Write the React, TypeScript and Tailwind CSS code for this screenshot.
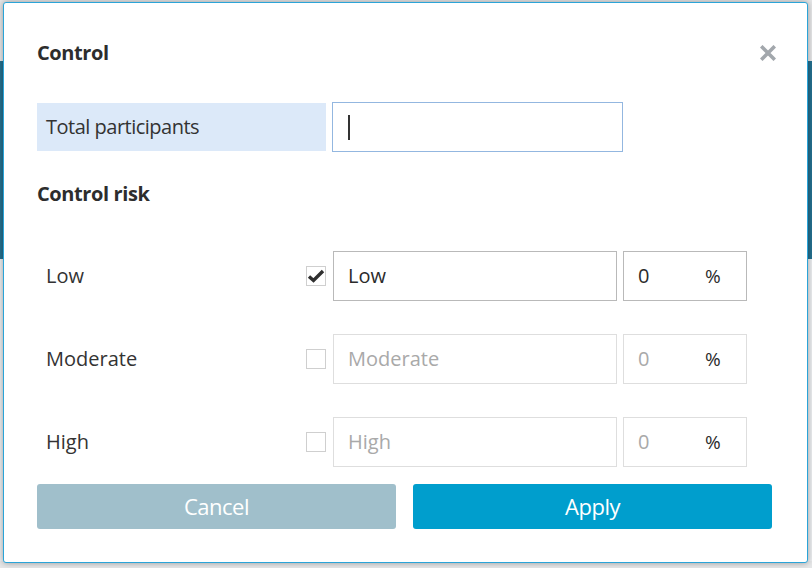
const rows = [
  { name: 'Low', checked: true },
  { name: 'Moderate', checked: false },
  { name: 'High', checked: false },
];

function CloseIcon() {
  return (
    <svg width="16" height="16" viewBox="0 0 16 16" className="block">
      <path d="M2.5 2.5 L13.5 13.5 M13.5 2.5 L2.5 13.5" stroke="#a2a7ac" strokeWidth="3.6" strokeLinecap="square" />
    </svg>
  );
}

function Checkbox({ checked }: { checked: boolean }) {
  return (
    <div className="w-[20px] h-[20px] border border-[#cfcfcf] bg-white flex items-center justify-center shrink-0">
      {checked && (
        <svg width="18" height="14" viewBox="0 0 18 14" className="block -mt-[1px]">
          <path d="M2 7.5 L6.5 11.5 L16 2" stroke="#2f2f2f" strokeWidth="3.4" fill="none" />
        </svg>
      )}
    </div>
  );
}

function RiskRow({ name, checked }: { name: string; checked: boolean }) {
  const text = checked ? 'text-[#2b2b2b]' : 'text-[#a9a9a9]';
  const border = checked ? 'border-[#b9b9b9]' : 'border-[#dedede]';
  return (
    <div className="flex items-center h-[50px]">
      <div className="w-[269px] pl-[9px] text-[20px] text-[#333]">{name}</div>
      <Checkbox checked={checked} />
      <div className={`ml-[7px] w-[284px] h-[50px] border ${border} flex items-center pl-[14px] text-[20px] ${text}`}>
        {name}
      </div>
      <div className={`ml-[6px] w-[124px] h-[50px] border ${border} flex items-center text-[20px] ${text}`}>
        <span className="pl-[14px] w-[81px]">0</span>
        <span className="text-[#2b2b2b] text-[19px]">%</span>
      </div>
    </div>
  );
}

export default function App() {
  return (
    <div className="relative w-[812px] h-[568px] bg-[#e6e7e8] overflow-hidden" style={{ fontFamily: '"Open Sans", "Noto Sans", sans-serif' }}>
      <div className="mt-[61px] h-[198px] bg-[#24708f]" />
      <div className="h-[302px] bg-[#eceef0]" />

      <div className="absolute left-[3px] top-[2px] w-[805px] h-[561px] bg-white border border-[#2aa4d8] rounded-[3px] shadow-[0_0_6px_rgba(0,0,0,0.35)] px-[33px]">
        <div className="h-[99px] flex items-center justify-between">
          <h1 className="text-[20px] font-bold text-[#2d2d2d] tracking-[-0.4px]">Control</h1>
          <div className="mr-[-2px]">
            <CloseIcon />
          </div>
        </div>

        <div className="flex items-center">
          <div className="w-[289px] h-[48px] bg-[#dce9f9] flex items-center pl-[9px] text-[20px] text-[#333] tracking-[-0.5px]">
            Total participants
          </div>
          <div className="ml-[6px] w-[291px] h-[50px] border border-[#93b7e0] flex items-center pl-[15px]">
            <div className="w-[1.5px] h-[25px] bg-[#333]" />
          </div>
        </div>

        <h2 className="mt-[28px] text-[20px] font-bold text-[#2d2d2d] tracking-[-0.4px] leading-[28px]">Control risk</h2>

        <div className="mt-[43px] flex flex-col gap-[33px]">
          {rows.map((r) => (
            <RiskRow key={r.name} name={r.name} checked={r.checked} />
          ))}
        </div>

        <div className="mt-[17px] flex gap-[17px]">
          <button type="button" className="w-[359px] h-[45px] rounded-[3px] bg-[#a0bfcb] text-white text-[22px] tracking-[-0.5px]">
            Cancel
          </button>
          <button type="button" className="w-[359px] h-[45px] rounded-[3px] bg-[#009ecd] text-white text-[22px] tracking-[-0.5px]">
            Apply
          </button>
        </div>
      </div>
    </div>
  );
}
